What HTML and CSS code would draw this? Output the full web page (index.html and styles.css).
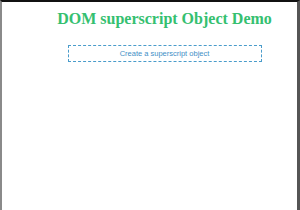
FILE: index.html
```html
<!DOCTYPE html>
<html>
<head>
<meta charset="utf-8">
<link rel="stylesheet" href="styles.css">
</head>
<body>
<div class="frame">
  <h1 class="title">DOM superscript Object Demo</h1>
  <div class="actions">
    <button class="create-btn">Create a superscript object</button>
  </div>
</div>
</body>
</html>
```
FILE: styles.css
```css
html, body {
  margin: 0;
  padding: 0;
  background: #ffffff;
}
.frame {
  box-sizing: border-box;
  width: 300px;
  height: 210px;
  border-top: 2px solid #111111;
  border-left: 2px solid #8a8a8a;
  border-right: 3px solid #555555;
  padding: 0 0 0 30px;
  margin-left: 0;
}
.title {
  margin: 8px 0 0 0;
  font-family: "Liberation Serif", "Times New Roman", serif;
  font-weight: bold;
  font-size: 16px;
  line-height: 18px;
  color: #35c070;
  text-align: center;
}
.actions {
  display: flex;
  justify-content: center;
  margin-top: 17px;
}
.create-btn {
  box-sizing: border-box;
  width: 194px;
  height: 17px;
  padding: 0;
  background: #ffffff;
  border: 1.5px dashed #4a9ccb;
  color: #3f8fc6;
  font-family: "Liberation Sans", Arial, sans-serif;
  font-size: 7.5px;
  line-height: 14px;
  text-align: center;
}
```
